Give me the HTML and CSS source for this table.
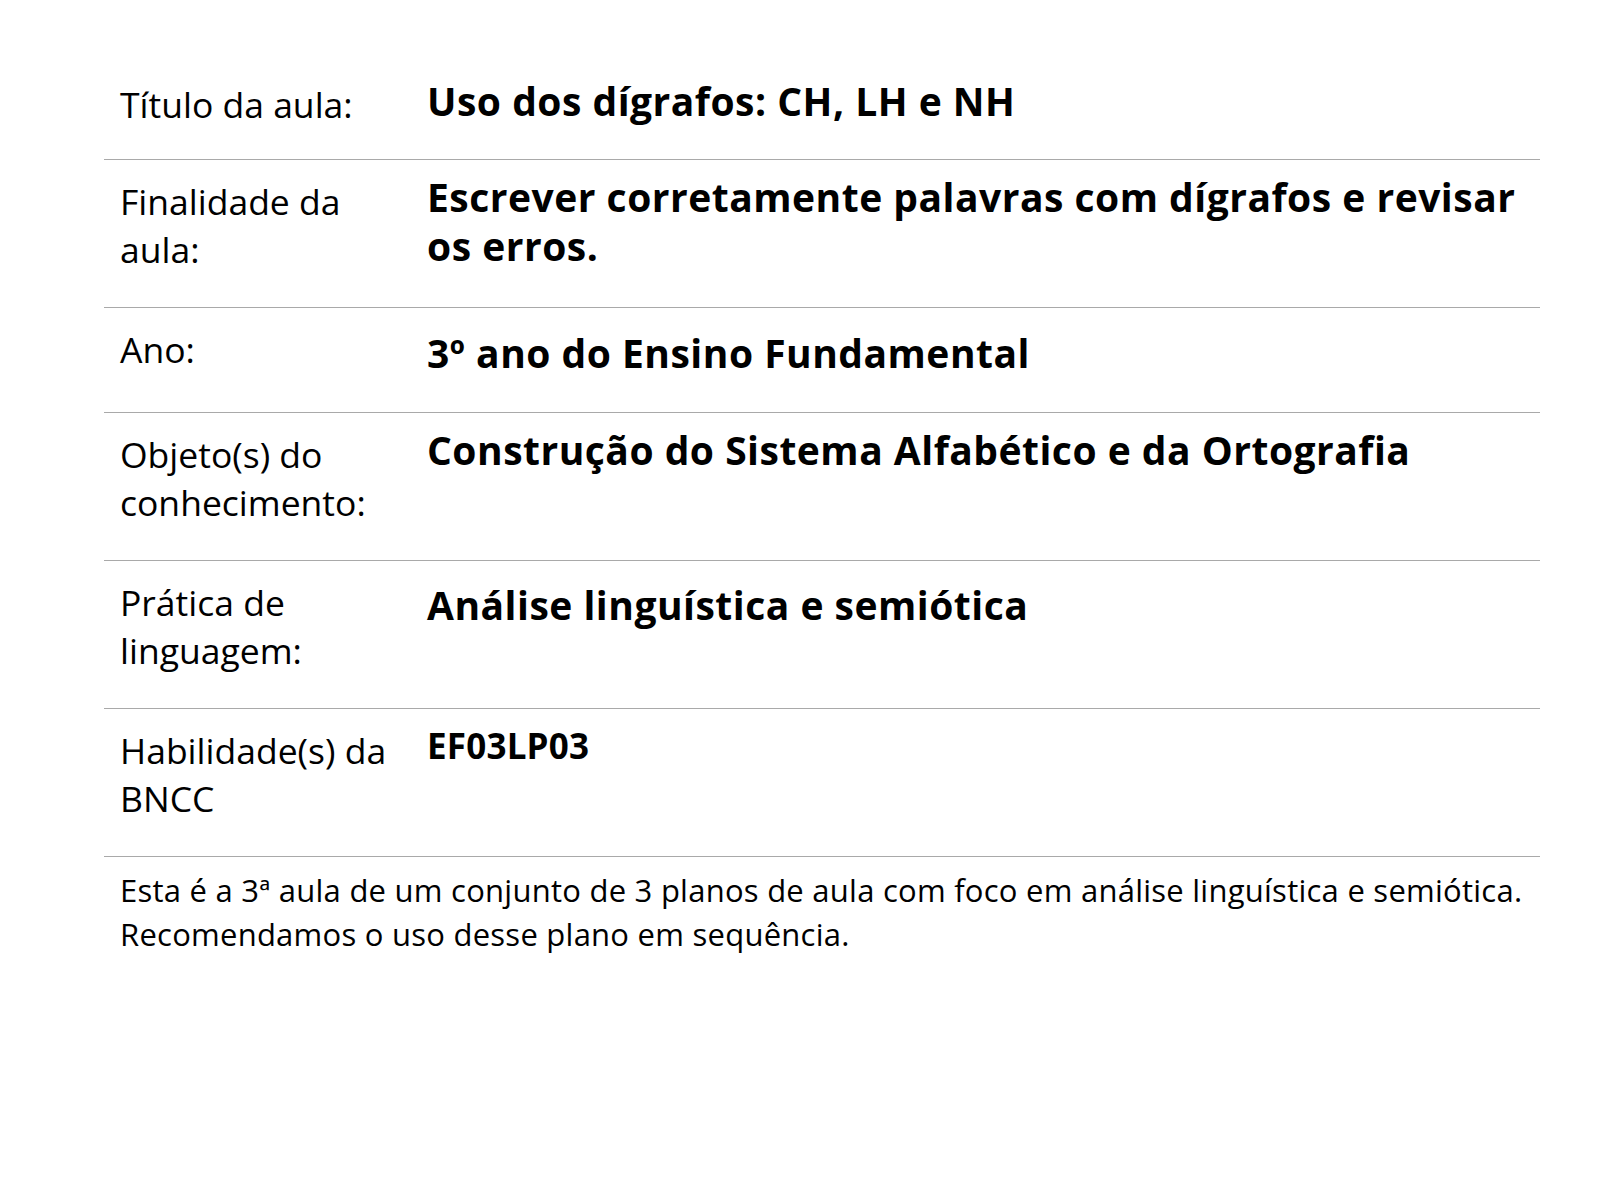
FILE: index.html
```html
<!DOCTYPE html>
<html lang="pt-BR">
<head>
<meta charset="utf-8">
<title>Plano de aula</title>
<link rel="stylesheet" href="styles.css">
</head>
<body>
<main class="plan">
  <div class="row row--first">
    <div class="label">Título da aula:</div>
    <div class="value value--title">Uso dos dígrafos: CH, LH e NH</div>
  </div>
  <div class="row">
    <div class="label">Finalidade da aula:</div>
    <div class="value">Escrever corretamente palavras com dígrafos e revisar os erros.</div>
  </div>
  <div class="row row--single">
    <div class="label">Ano:</div>
    <div class="value value--low">3º ano do Ensino Fundamental</div>
  </div>
  <div class="row">
    <div class="label">Objeto(s) do conhecimento:</div>
    <div class="value">Construção do Sistema Alfabético e da Ortografia</div>
  </div>
  <div class="row">
    <div class="label">Prática de linguagem:</div>
    <div class="value value--mid">Análise linguística e semiótica</div>
  </div>
  <div class="row">
    <div class="label">Habilidade(s) da BNCC</div>
    <div class="value value--code">EF03LP03</div>
  </div>
  <p class="note">Esta é a 3ª aula de um conjunto de 3 planos de aula com foco em análise linguística e semiótica. Recomendamos o uso desse plano em sequência.</p>
</main>
</body>
</html>
```

FILE: styles.css
```css
html, body {
  margin: 0;
  padding: 0;
  background: #ffffff;
}

body {
  font-family: "Open Sans", "Noto Sans", sans-serif;
  color: #000000;
}

.plan {
  width: 1436px;
  margin: 63px 0 0 104px;
}

.row {
  display: grid;
  grid-template-columns: 323px 1fr;
  padding: 17px 0 34px;
  border-bottom: 1px solid #a9a9a9;
}

.row--first {
  padding-bottom: 31px;
}

.row--single {
  padding-bottom: 39px;
}

.label {
  padding-left: 16px;
  padding-right: 12px;
  font-size: 35.5px;
  line-height: 48px;
  font-weight: 400;
}

.value {
  margin-top: -5px;
  font-size: 39px;
  line-height: 49px;
  font-weight: 700;
  letter-spacing: 0.5px;
}

.value--title {
  margin-top: -4px;
}

.value--low {
  margin-top: 3px;
  margin-bottom: -10px;
}

.value--mid {
  margin-top: 2px;
}

.value--code {
  margin-top: -5px;
  font-size: 35px;
  letter-spacing: 0.2px;
}

.note {
  margin: 11px 0 0;
  padding-left: 16px;
  font-size: 31px;
  line-height: 44px;
  letter-spacing: 0.25px;
}
```
